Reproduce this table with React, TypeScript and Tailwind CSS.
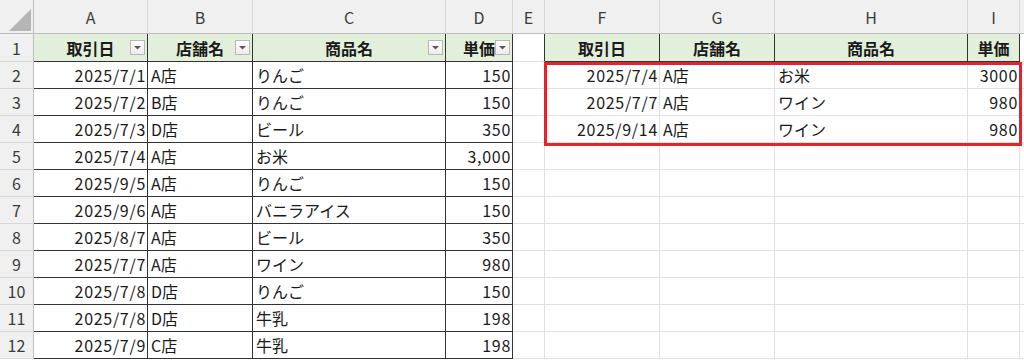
import React from "react";

const cols = ["A", "B", "C", "D", "E", "F", "G", "H", "I", ""];

type Cell = { v: string; right?: boolean };

const head = ["取引日", "店舗名", "商品名", "単価"];

const left: [string, string, string, string][] = [
  ["2025/7/1", "A店", "りんご", "150"],
  ["2025/7/2", "B店", "りんご", "150"],
  ["2025/7/3", "D店", "ビール", "350"],
  ["2025/7/4", "A店", "お米", "3,000"],
  ["2025/9/5", "A店", "りんご", "150"],
  ["2025/9/6", "A店", "バニラアイス", "150"],
  ["2025/8/7", "A店", "ビール", "350"],
  ["2025/7/7", "A店", "ワイン", "980"],
  ["2025/7/8", "D店", "りんご", "150"],
  ["2025/7/8", "D店", "牛乳", "198"],
  ["2025/7/9", "C店", "牛乳", "198"],
];

const right: [string, string, string, string][] = [
  ["2025/7/4", "A店", "お米", "3000"],
  ["2025/7/7", "A店", "ワイン", "980"],
  ["2025/9/14", "A店", "ワイン", "980"],
];

function FilterButton() {
  return (
    <span className="absolute right-[2px] top-[6px] w-[15px] h-[15px] border border-[#b8b8b8] bg-gradient-to-b from-white to-[#ececec] flex items-center justify-center">
      <svg width="7" height="5" viewBox="0 0 7 5">
        <path d="M0 1h7L3.5 4.5z" fill="#5a5a5a" />
      </svg>
    </span>
  );
}

function rowCells(r: number): Cell[] {
  const l = left[r - 2];
  const rt = right[r - 2];
  return [
    { v: l[0], right: true },
    { v: l[1] },
    { v: l[2] },
    { v: l[3], right: true },
    { v: "" },
    { v: rt ? rt[0] : "", right: true },
    { v: rt ? rt[1] : "" },
    { v: rt ? rt[2] : "" },
    { v: rt ? rt[3] : "", right: true },
    { v: "" },
  ];
}

export default function App() {
  const rows = Array.from({ length: 12 }, (_, i) => i + 1);

  return (
    <div
      className="relative w-[1024px] h-[360px] overflow-hidden bg-white text-[16px] text-[#1a1a1a]"
      style={{ fontFamily: '"Noto Sans CJK JP", "Noto Sans", sans-serif' }}
    >
      <div className="grid grid-cols-[34px_114px_105px_193px_67px_32px_115px_115px_193px_52px_20px] grid-rows-[34px_28px_repeat(11,27px)]">
        {/* select-all corner */}
        <div className="relative bg-[#f0f0f0] border-r border-b border-r-[#bdbdbd] border-b-[#bdbdbd]">
          <svg className="absolute right-[2px] bottom-[2px]" width="22" height="22" viewBox="0 0 22 22">
            <path d="M22 0V22H0z" fill="#b5b5b5" />
          </svg>
        </div>
        {cols.map((c, i) => (
          <div
            key={i}
            className="bg-[#f0f0f0] border-r border-b border-r-[#d8d8d8] border-b-[#bdbdbd] flex items-center justify-center text-[#3c3c3c]"
          >
            {c}
          </div>
        ))}

        {rows.map((r) => (
          <React.Fragment key={r}>
            <div className="bg-[#f0f0f0] border-r border-b border-r-[#bdbdbd] border-b-[#d8d8d8] flex items-center justify-center text-[#3c3c3c]">
              {r}
            </div>
            {r === 1 ? (
              <>
                {head.map((h, i) => (
                  <div
                    key={"l" + i}
                    className="relative bg-[#e2efda] border-r border-b border-r-[#333] border-b-[#333] flex items-center justify-center font-bold"
                  >
                    {h}
                    <FilterButton />
                  </div>
                ))}
                <div className="border-r border-b border-r-[#333] border-b-[#e1e1e1]" />
                {head.map((h, i) => (
                  <div
                    key={"r" + i}
                    className="bg-[#e2efda] border-r border-b border-r-[#333] border-b-[#333] flex items-center justify-center font-bold"
                  >
                    {h}
                  </div>
                ))}
                <div className="border-r border-b border-r-[#e1e1e1] border-b-[#e1e1e1]" />
              </>
            ) : (
              rowCells(r).map((cell, i) => (
                <div
                  key={i}
                  className={
                    (i < 4
                      ? "border-r border-b border-r-[#333] border-b-[#333] "
                      : "border-r border-b border-r-[#e1e1e1] border-b-[#e1e1e1] ") +
                    (cell.right
                      ? "flex items-center justify-end pr-[1px] tracking-[0.7px] whitespace-nowrap"
                      : "flex items-center justify-start pl-[3px] whitespace-nowrap")
                  }
                >
                  {cell.v}
                </div>
              ))
            )}
          </React.Fragment>
        ))}
      </div>

      {/* red highlight around extracted rows */}
      <div className="absolute left-[544px] top-[62px] w-[478px] h-[84px] border-[3px] border-[#e3252b] pointer-events-none" />
    </div>
  );
}
